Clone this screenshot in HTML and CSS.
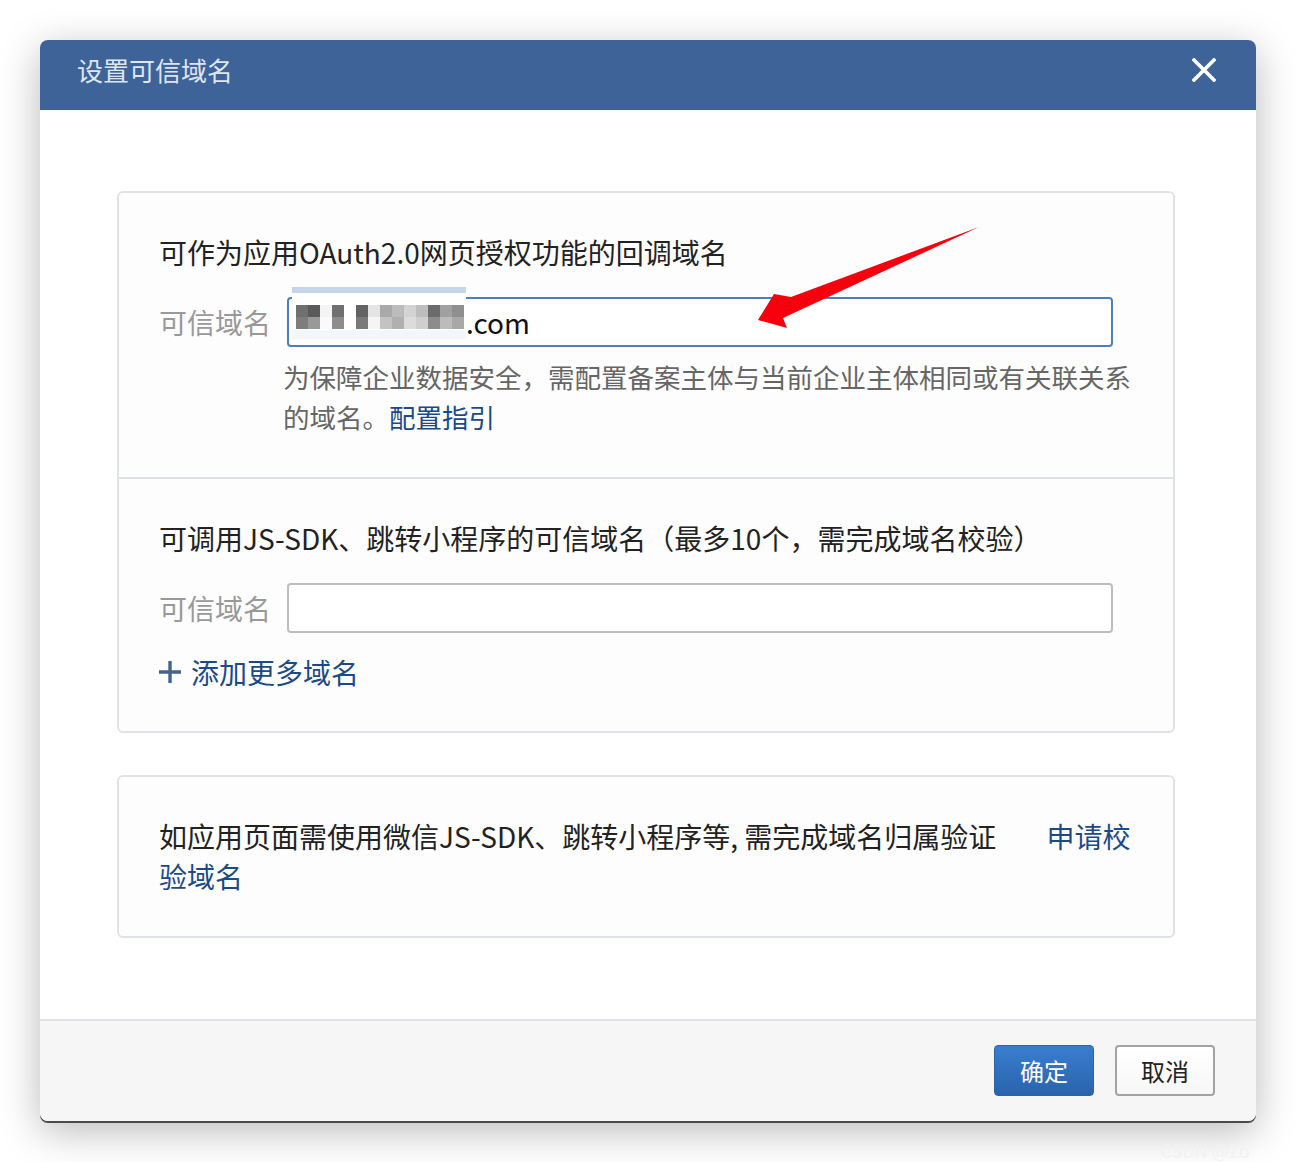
FILE: index.html
```html
<!DOCTYPE html>
<html lang="zh-CN">
<head>
    <meta charset="UTF-8">
    <title>设置可信域名</title>
    <meta name="viewport" content="width=device-width, initial-scale=1.0">
    <link rel="stylesheet" href="styles.css">
</head>
<body>
    <div class="page">
        <div class="dialog">
            <div class="dialog_head">
                <span class="dialog_title">设置可信域名</span>
                <span class="close">
                    <svg width="24" height="24" viewBox="0 0 24 24">
                        <path d="M2 2 L22 22 M22 2 L2 22" stroke="#fff" stroke-width="3.6" stroke-linecap="square" fill="none"/>
                    </svg>
                </span>
            </div>

            <div class="dialog_body">
                <div class="panel">
                    <div class="section">
                        <div class="section_title">可作为应用OAuth2.0网页授权功能的回调域名</div>
                        <div class="row">
                            <span class="label">可信域名</span>
                            <div class="field focused">
                                <span class="masked">
                                    <span class="mask_bar"></span>
                                    <span class="mask_grid">
                                        <i style="background:#6f6f6f"></i><i style="background:#5a5a5a"></i><i style="background:#f4f4f4"></i><i style="background:#707070"></i><i style="background:#fff"></i><i style="background:#636363"></i><i style="background:#e5e5e5"></i><i style="background:#a9a9a9"></i><i style="background:#bcbcbc"></i><i style="background:#d3d3d3"></i><i style="background:#bdbdbd"></i><i style="background:#6b6b6b"></i><i style="background:#a1a1a1"></i><i style="background:#8f8f8f"></i>
                                        <i style="background:#7d7d7d"></i><i style="background:#999"></i><i style="background:#fafafa"></i><i style="background:#8d8d8d"></i><i style="background:#fff"></i><i style="background:#7a7a7a"></i><i style="background:#f5f5f5"></i><i style="background:#c3c3c3"></i><i style="background:#b0b0b0"></i><i style="background:#dcdcdc"></i><i style="background:#cfcfcf"></i><i style="background:#8c8c8c"></i><i style="background:#bcbcbc"></i><i style="background:#a8a8a8"></i>
                                    </span>
                                </span>
                                <span class="value">.com</span>
                            </div>
                        </div>
                        <p class="hint">为保障企业数据安全，需配置备案主体与当前企业主体相同或有关联关系的域名。<a class="link" href="#">配置指引</a></p>
                    </div>

                    <div class="section section_second">
                        <div class="section_title">可调用JS-SDK、跳转小程序的可信域名（最多10个，需完成域名校验）</div>
                        <div class="row">
                            <span class="label">可信域名</span>
                            <div class="field"></div>
                        </div>
                        <a class="add_more" href="#">
                            <svg width="22" height="22" viewBox="0 0 22 22">
                                <path d="M11 0 V22 M0 11 H22" stroke="#45628f" stroke-width="3.4" fill="none"/>
                            </svg>
                            添加更多域名
                        </a>
                    </div>
                </div>

                <div class="panel">
                    <div class="section">
                        <p class="notice">如应用页面需使用微信JS-SDK、跳转小程序等, 需完成域名归属验证<a class="link apply" href="#">申请校验域名</a></p>
                    </div>
                </div>
            </div>

            <div class="dialog_foot">
                <button class="btn btn_primary">确定</button>
                <button class="btn">取消</button>
            </div>
        </div>
        <div class="watermark">CSDN @Zo</div>
    </div>

    <svg class="annotation" width="1296" height="1162" viewBox="0 0 1296 1162">
        <polygon points="979,227 791,297 774,294 758,320 787,328 783,318" fill="#f5000c"/>
    </svg>
</body>
</html>
```

FILE: styles.css
```css
:root {
    --head-blue: #3e6399;
    --link-blue: #1b4a87;
    --line: #dfe3e8;
    --text: #222;
    --label: #999;
    --hint: #666;
}
* {
    box-sizing: border-box;
    padding: 0;
    margin: 0;
}
body {
    background: #fff;
    font-family: "Noto Sans CJK SC", "Noto Sans", sans-serif;
    color: var(--text);
}

.page {
    padding: 40px 40px 0 40px;
}

/* Dialog */
.dialog {
    width: 1216px;
    border-radius: 8px;
    background: #fff;
    box-shadow: 0 2px 0 #4a4a4a, 0 10px 40px rgba(0, 0, 0, 0.28);
    overflow: hidden;
}
.dialog_head {
    height: 70px;
    background: var(--head-blue);
    display: flex;
    align-items: center;
    justify-content: space-between;
    padding: 0 40px 10px 37px;
}
.dialog_title {
    color: #dfe6f0;
    font-size: 26px;
    line-height: 36px;
}
.close {
    display: flex;
    width: 24px;
    height: 24px;
}

.dialog_body {
    padding: 81px 81px 81px 77px;
    display: flex;
    flex-direction: column;
    gap: 42px;
}

/* Panels */
.panel {
    border: 2px solid var(--line);
    border-radius: 6px;
    background: #fdfdfd;
}
.section {
    padding: 39px 40px 40px 40px;
}
.section_second {
    border-top: 2px solid var(--line);
    padding-bottom: 39px;
}
.section_title {
    font-size: 28px;
    line-height: 40px;
    color: var(--text);
}
.row {
    display: flex;
    align-items: center;
    margin-top: 25px;
}
.label {
    width: 112px;
    margin-right: 16px;
    font-size: 28px;
    line-height: 40px;
    color: var(--label);
    flex-shrink: 0;
}
.field {
    width: 826px;
    height: 50px;
    border: 2px solid #bdbdbd;
    border-radius: 4px;
    background: #fff;
    display: flex;
    align-items: flex-start;
    padding-left: 3px;
}
.field.focused {
    border-color: #4c7fbc;
}
.masked {
    display: flex;
    flex-direction: column;
    width: 174px;
    height: 52px;
    margin-top: -12px;
    background: #fff;
}
.mask_bar {
    display: block;
    height: 7px;
    background: #c6d6ea;
}
.mask_grid {
    display: grid;
    grid-template-columns: repeat(14, 12px);
    grid-template-rows: 12px 12px;
    padding: 12px 0 10px 4px;
    background: linear-gradient(#fff 0, #fff 80%, #f3f6fa 80%);
}
.mask_grid i {
    display: block;
}
.value {
    font-size: 28px;
    line-height: 46px;
    color: #111;
}
.hint {
    margin: 10px -8px 0 124px;
    font-size: 26.5px;
    line-height: 40px;
    color: var(--hint);
}
.link {
    color: var(--link-blue);
    text-decoration: none;
}
.add_more {
    display: flex;
    align-items: center;
    gap: 10px;
    margin-top: 19px;
    font-size: 28px;
    line-height: 40px;
    color: var(--link-blue);
    text-decoration: none;
}
.notice {
    font-size: 28px;
    line-height: 40px;
    color: var(--text);
    margin-right: -12px;
}
.apply {
    margin-left: 50px;
}

/* Footer */
.dialog_foot {
    border-top: 2px solid var(--line);
    background: #f6f6f6;
    display: flex;
    justify-content: flex-end;
    gap: 21px;
    padding: 24px 41px 25px 0;
}
.btn {
    width: 100px;
    height: 51px;
    border: 2px solid #a3a3a3;
    border-radius: 4px;
    background: linear-gradient(#fff, #f7f7f7);
    font-family: "Noto Sans CJK SC", sans-serif;
    font-size: 24px;
    color: var(--text);
    cursor: pointer;
}
.btn_primary {
    border: 1px solid #2b63a9;
    background: linear-gradient(#3a7ed0, #2a63ad);
    color: #fff;
}

.watermark {
    text-align: right;
    padding: 16px 6px 0 0;
    font-size: 18px;
    color: #f2f2f2;
}

.annotation {
    position: absolute;
    top: 0;
    left: 0;
    pointer-events: none;
}
```
